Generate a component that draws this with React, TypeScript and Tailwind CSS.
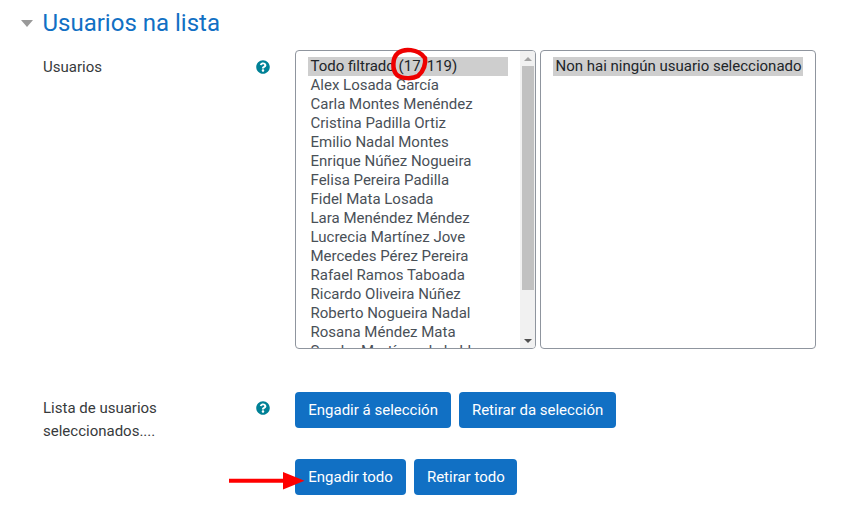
import React from 'react';

const users = [
  'Alex Losada García',
  'Carla Montes Menéndez',
  'Cristina Padilla Ortiz',
  'Emilio Nadal Montes',
  'Enrique Núñez Nogueira',
  'Felisa Pereira Padilla',
  'Fidel Mata Losada',
  'Lara Menéndez Méndez',
  'Lucrecia Martínez Jove',
  'Mercedes Pérez Pereira',
  'Rafael Ramos Taboada',
  'Ricardo Oliveira Núñez',
  'Roberto Nogueira Nadal',
  'Rosana Méndez Mata',
  'Sandra Martínez de la Llana',
];

const HelpIcon = () => (
  <svg viewBox="0 0 512 512" className="w-[14px] h-[14px]" fill="#008196">
    <path d="M504 256c0 137-111 248-248 248S8 393 8 256 119 8 256 8s248 111 248 248zM262.700 90c-54.500 0-89.300 23-116.500 63.800-3.500 5.300-2.400 12.400 2.700 16.300l34.700 26.300c5.200 3.900 12.600 3 16.700-2.100 17.900-22.700 30.100-35.800 57.300-35.800 20.400 0 45.700 13.100 45.700 32.900 0 15-12.400 22.700-32.600 34-23.600 13.200-54.800 29.700-54.800 70.900V300c0 6.600 5.400 12 12 12h56c6.600 0 12-5.400 12-12v-1.300c0-28.600 83.500-29.800 83.500-107.200C379.400 133.200 318.900 90 262.700 90zM256 339c-25.500 0-46.200 20.700-46.200 46.200 0 25.500 20.700 46.200 46.200 46.200s46.200-20.700 46.200-46.200c0-25.500-20.700-46.200-46.200-46.200z" />
  </svg>
);

const Btn = ({ label }: { label: string }) => (
  <button className="h-[36px] pl-[13.250px] pr-[12.750px] rounded-[4px] bg-[#1170c4] text-white text-[15px] leading-[22px] whitespace-nowrap">
    {label}
  </button>
);

const App = () => {
  return (
    <div
      className="relative w-[849px] h-[509px] overflow-hidden bg-white text-[#373a3c] text-[15px]"
      style={{ fontFamily: 'Roboto, "Liberation Sans", sans-serif' }}
    >
      <div className="flex items-center pt-[7px] pl-[21px] h-[39px]">
        <div className="w-0 h-0 border-x-[6.500px] border-x-transparent border-t-[7px] border-t-[#999999]" />
        <h2 className="ml-[9.500px] text-[24px] leading-[28px] text-[#1170c4]">Usuarios na lista</h2>
      </div>

      <div className="flex mt-[11px] pl-[43px]">
        <div className="w-[252px] flex items-start justify-between pr-[25px] pt-[8px]">
          <span className="leading-[19px]">Usuarios</span>
          <span className="mt-[2px]"><HelpIcon /></span>
        </div>
        <div className="flex gap-[4px]">
          <div className="flex w-[241px] h-[299px] border border-[#8f959e] rounded-[4px] overflow-hidden">
            <div className="flex-1 min-w-0 overflow-hidden pl-[12px] pr-[12px] pt-[6px] leading-[19px]">
              <div className="bg-[#cecece] text-[#212529] pl-[2.500px] whitespace-nowrap">Todo filtrado (17/119)</div>
              {users.map(name => (
                <div key={name} className="pl-[2.500px] whitespace-nowrap text-[#495057]">{name}</div>
              ))}
            </div>
            <div className="w-[15px] bg-[#f1f1f1] flex flex-col items-center">
              <div className="h-[15px] flex items-center justify-center">
                <div className="w-0 h-0 border-x-[4px] border-x-transparent border-b-[4px] border-b-[#a3a3a3]" />
              </div>
              <div className="w-[12px] h-[224px] bg-[#c1c1c1]" />
              <div className="flex-1" />
              <div className="h-[15px] flex items-center justify-center">
                <div className="w-0 h-0 border-x-[4px] border-x-transparent border-t-[4px] border-t-[#505050]" />
              </div>
            </div>
          </div>
          <div className="w-[276px] h-[299px] border border-[#8f959e] rounded-[4px] pl-[12px] pr-[12px] pt-[6px] leading-[19px]">
            <div className="bg-[#cecece] text-[#212529] pl-[2.500px] whitespace-nowrap">Non hai ningún usuario seleccionado</div>
          </div>
        </div>
      </div>

      <div className="flex mt-[43px] pl-[43px]">
        <div className="w-[252px] flex items-start justify-between pr-[25px] pt-[5px]">
          <span className="w-[160px] leading-[22.500px]">Lista de usuarios seleccionados....</span>
          <span className="mt-[4px]"><HelpIcon /></span>
        </div>
        <div className="flex flex-col gap-[31px]">
          <div className="flex gap-[8px]">
            <Btn label="Engadir á selección" />
            <Btn label="Retirar da selección" />
          </div>
          <div className="flex gap-[8px]">
            <Btn label="Engadir todo" />
            <Btn label="Retirar todo" />
          </div>
        </div>
      </div>

      {/* red annotations drawn over the screenshot */}
      <svg className="absolute left-0 top-0 pointer-events-none" width="849" height="509" fill="none">
        <path
          d="M424 57C418 49 404 48 398 53C392 58 392 70 397 75C402 79 413 79 418 76C424 71 426 63 425 58"
          stroke="#ee0000"
          strokeWidth="4.500"
          strokeLinecap="round"
        />
        <path d="M229 480.700h55" stroke="#ff0000" strokeWidth="4" />
        <path d="M283 472l21.500 8.700-21.500 8.800z" fill="#ff0000" />
      </svg>
    </div>
  );
};

export default App;
